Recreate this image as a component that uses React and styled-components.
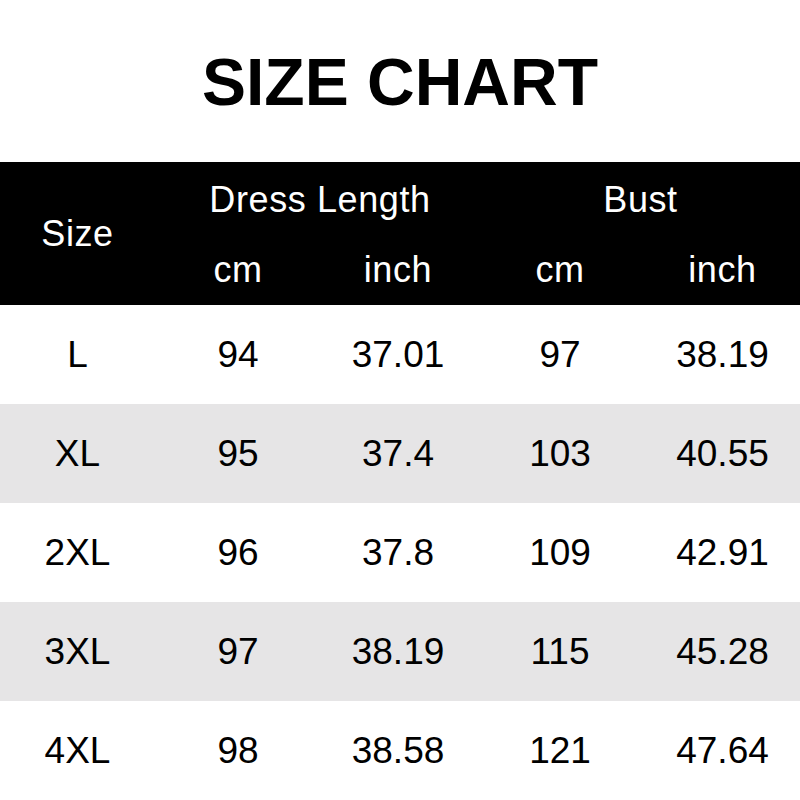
import React from "react";
import styled, { createGlobalStyle } from "styled-components";

const GlobalStyle = createGlobalStyle`
  body {
    margin: 0;
    background: #ffffff;
    font-family: "Liberation Sans", Arial, sans-serif;
  }
`;

const COLS = "155px 166px 154px 170px 155px";

const Page = styled.div`
  width: 800px;
  height: 800px;
  overflow: hidden;
  background: #ffffff;
`;

const Title = styled.h1`
  margin: 0;
  height: 162px;
  display: flex;
  align-items: center;
  justify-content: center;
  font-size: 66px;
  font-weight: bold;
  color: #000;
  padding-top: 2px;
  box-sizing: border-box;
`;

const Header = styled.div`
  display: grid;
  grid-template-columns: ${COLS};
  grid-template-rows: 71px 72px;
  background: #000;
  color: #fff;
  font-size: 36px;
  letter-spacing: 0.6px;
`;

const HeadCell = styled.div`
  display: flex;
  align-items: center;
  justify-content: center;
  grid-column: ${(p) => p.$col || "auto"};
  grid-row: ${(p) => p.$row || "auto"};
  padding-top: ${(p) => p.$pt || 0}px;
  padding-left: ${(p) => p.$pl || 0}px;
`;

const Row = styled.div`
  display: grid;
  grid-template-columns: ${COLS};
  height: 99px;
  background: ${(p) => (p.$shade ? "#e6e5e6" : "#ffffff")};
  color: #000;
  font-size: 37px;
`;

const Cell = styled.div`
  display: flex;
  align-items: center;
  justify-content: center;
`;

const rows = [
  ["L", "94", "37.01", "97", "38.19"],
  ["XL", "95", "37.4", "103", "40.55"],
  ["2XL", "96", "37.8", "109", "42.91"],
  ["3XL", "97", "38.19", "115", "45.28"],
  ["4XL", "98", "38.58", "121", "47.64"],
];

const App = () => {
  return (
    <Page>
      <GlobalStyle />
      <Title>SIZE CHART</Title>
      <Header>
        <HeadCell $col="1" $row="1 / span 2">Size</HeadCell>
        <HeadCell $col="2 / span 2" $row="1" $pt={4} $pl={10}>Dress Length</HeadCell>
        <HeadCell $col="4 / span 2" $row="1" $pt={4} $pl={6}>Bust</HeadCell>
        <HeadCell $col="2" $row="2" $pt={2}>cm</HeadCell>
        <HeadCell $col="3" $row="2" $pt={2}>inch</HeadCell>
        <HeadCell $col="4" $row="2" $pt={2}>cm</HeadCell>
        <HeadCell $col="5" $row="2" $pt={2}>inch</HeadCell>
      </Header>
      {rows.map((r, i) => (
        <Row key={i} $shade={i % 2 === 1}>
          {r.map((v, j) => (
            <Cell key={j}>{v}</Cell>
          ))}
        </Row>
      ))}
    </Page>
  );
};

export default App;
